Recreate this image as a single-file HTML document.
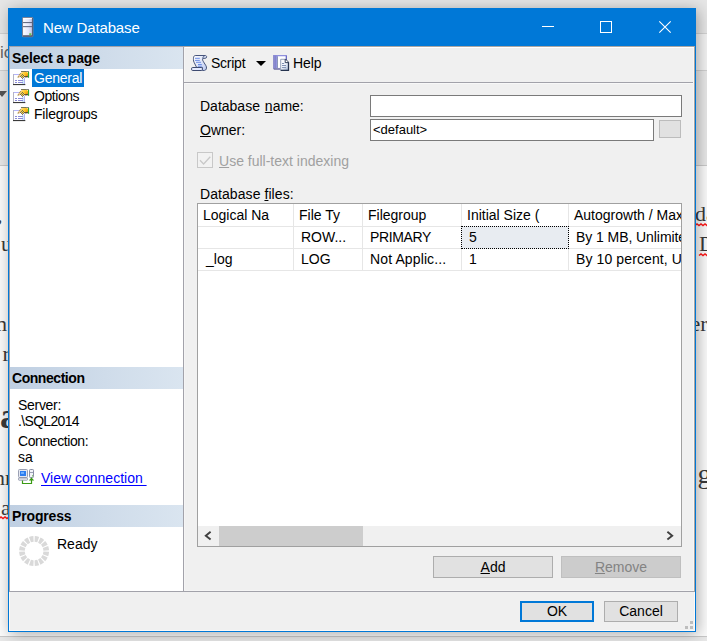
<!DOCTYPE html>
<html>
<head>
<meta charset="utf-8">
<title>New Database</title>
<style>
html,body{margin:0;padding:0;}
body{width:707px;height:641px;overflow:hidden;position:relative;background:#fff;font-family:"Liberation Sans",Arial,sans-serif;font-size:14px;color:#000;}
.abs{position:absolute;}
.t{position:absolute;white-space:nowrap;line-height:16px;height:16px;}
u{text-decoration:underline;text-underline-offset:1px;text-decoration-thickness:1px;}
svg{position:absolute;overflow:visible;}
/* background application */
.bg{position:absolute;left:0;width:707px;}
.serif{font-family:"Liberation Serif",serif;color:#3a3a3a;position:absolute;white-space:nowrap;font-size:22px;line-height:30px;height:30px;}
.sq{text-decoration:underline wavy #f02020;text-decoration-thickness:1.6px;text-underline-offset:1px;}
/* window */
#win{left:8px;top:8px;width:688px;height:624px;background:#f0f0f0;border:1px solid #0078d7;box-sizing:border-box;box-shadow:2px 2px 14px rgba(0,0,0,.32);}
#title{left:0;top:0;width:686px;height:37px;background:#0078d7;}
#title .cap{left:34px;top:9px;color:#fff;font-size:15px;line-height:20px;height:20px;letter-spacing:-.15px;}
#left{left:0;top:37px;width:175px;height:546px;background:#fff;border:1px solid #a2a2aa;box-sizing:border-box;}
.hdr{position:absolute;left:0;width:173px;height:22px;background:linear-gradient(90deg,#bfcfe2 0%,#cfdcea 55%,#dae5f0 100%);}
.hdr span{position:absolute;left:2px;top:3px;font-weight:bold;font-size:14px;line-height:16px;white-space:nowrap;}
.tr{letter-spacing:-.25px;}
.inp{position:absolute;background:#fff;border:1px solid #7a7a7a;box-sizing:border-box;}
.btn{position:absolute;background:#e1e1e1;border:1px solid #adadad;box-sizing:border-box;text-align:center;line-height:20px;font-size:14px;}
#grid{left:188px;top:194px;width:485px;height:344px;background:#fff;border:1px solid #a0a0a0;box-sizing:border-box;overflow:hidden;}
.gl{position:absolute;background:#e6e6e6;}
</style>
</head>
<body>
<!-- background app behind the dialog -->
<div class="bg" style="top:0;height:33px;background:#e6e6e6;"></div>
<div class="bg" style="top:33px;height:1px;background:#d2d2d2;"></div>
<div class="bg" style="top:34px;height:36px;background:#f3f3f3;"></div>
<div class="bg" style="top:70px;height:1px;background:#d0d0d0;"></div>
<div class="bg" style="top:71px;height:94px;background:#e8e8e8;"></div>
<div class="bg" style="top:165px;height:1px;background:#cacaca;"></div>
<div class="bg" style="top:166px;height:470px;background:#fbfbfb;"></div>
<div class="bg" style="top:636px;height:1px;background:#c8c8c8;"></div>
<div class="bg" style="top:637px;height:4px;background:#e8e8e8;"></div>

<div class="t" style="left:0px;top:43px;font-size:17px;line-height:20px;height:20px;color:#666;">ic</div>
<div class="abs" style="left:-3px;top:91px;width:0;height:0;border-left:5.5px solid transparent;border-right:5.5px solid transparent;border-top:6px solid #555;"></div>
<div class="serif" style="left:-3px;top:200px;">,</div>
<div class="serif" style="left:1px;top:229px;">u</div>
<div class="serif" style="left:-10px;top:309px;">m</div>
<div class="serif" style="left:2.5px;top:339px;">r</div>
<div class="serif" style="left:0px;top:396px;font-size:36px;font-weight:bold;line-height:40px;height:40px;">a</div>
<div class="serif" style="left:-6px;top:463px;">nr</div>
<div class="serif" style="left:1px;top:493px;">a</div>
<div class="serif" style="left:695px;top:199px;">da</div>
<div class="serif" style="left:699px;top:229px;">D</div>
<div class="serif" style="left:690.5px;top:309px;">er</div>
<div class="serif" style="left:697.5px;top:459px;font-size:28px;">ge</div>
<svg style="left:0;top:0;" width="707" height="641" viewBox="0 0 707 641"><path d="M-1,518.5 l2,-1.6 l2,1.6 l2,-1.6 l2,1.6 l2,-1.6 M695,225.5 l2,-1.6 l2,1.6 l2,-1.6 l2,1.6 l2,-1.6 l2,1.6 l2,-1.6 M699,255.5 l2,-1.6 l2,1.6 l2,-1.6 l2,1.6 l2,-1.6" fill="none" stroke="#ff1a1a" stroke-width="1.5"/></svg>

<div id="win" class="abs">
  <div id="title" class="abs">
    <!-- server icon -->
    <svg style="left:12.8px;top:7.9px;" width="11.4" height="20.3" viewBox="0 0 11 20" preserveAspectRatio="none">
      <defs>
        <linearGradient id="sg" x1="0" y1="0" x2="1" y2="0"><stop offset="0" stop-color="#ffffff"/><stop offset=".6" stop-color="#e4e6fb"/><stop offset="1" stop-color="#b4b8da"/></linearGradient>
      </defs>
      <rect x="0.5" y="0.5" width="10" height="19" rx="1" fill="url(#sg)" stroke="#7c8298" stroke-width="1"/>
      <rect x="1" y="1" width="9" height="1" fill="#fff" opacity=".9"/>
      <rect x="1" y="5" width="9" height="1" fill="#5b637c"/>
      <rect x="1" y="9" width="9" height="1" fill="#5b637c"/>
      <rect x="1" y="18" width="9" height="1.4" fill="#4a5068"/>
      <rect x="9.6" y="1" width="1" height="18" fill="#596078"/>
      <rect x="7" y="16" width="2" height="2" fill="#6cc24a"/>
    </svg>
    <div class="t cap">New Database</div>
    <!-- caption buttons -->
    <div class="abs" style="left:533px;top:17px;width:12px;height:1px;background:#fff;"></div>
    <div class="abs" style="left:591px;top:12px;width:12px;height:12px;border:1px solid #fff;box-sizing:border-box;"></div>
    <svg style="left:650px;top:12px;" width="12" height="12" viewBox="0 0 12 12"><path d="M0.3,0.3 L11.7,11.7 M11.7,0.3 L0.3,11.7" stroke="#fff" stroke-width="1.1" fill="none"/></svg>
  </div>

  <div id="left" class="abs">
    <div class="hdr" style="top:0"><span style="letter-spacing:-.12px">Select a page</span></div>

    <svg width="0" height="0" style="left:0;top:0;">
      <defs>
        <linearGradient id="hg" x1="0" y1="0" x2="1" y2="1"><stop offset="0" stop-color="#ffe48a"/><stop offset=".5" stop-color="#ffc21e"/><stop offset="1" stop-color="#e88600"/></linearGradient>
        <symbol id="pg" viewBox="0 0 17 16" overflow="visible">
          <rect x="0" y="3" width="12" height="11" fill="#fff"/>
          <rect x="0" y="3" width="12" height="1" fill="#b4b4fa"/>
          <rect x="0" y="3" width="1" height="11" fill="#b4b4c4"/>
          <rect x="9" y="8" width="3" height="5" fill="#cdeafc"/>
          <rect x="11" y="7" width="1" height="6" fill="#b4b4f2"/>
          <rect x="0" y="13" width="12.3" height="1.1" fill="#3a3a3a"/>
          <rect x="2" y="9" width="2" height="1" fill="#8a8ad6"/>
          <rect x="5" y="9" width="5" height="1" fill="#8a8ad6"/>
          <rect x="2" y="11" width="2" height="1" fill="#8a8ad6"/>
          <rect x="5" y="11" width="5" height="1" fill="#8a8ad6"/>
          <path d="M4.3,6 L7,2.2 L9.2,0.9 L9.4,3.2 L6.8,6.3 L5.2,6.8 Z" fill="#eeb88a" opacity=".95"/>
          <path d="M5,5h1v1h-1z M6,3h1v1h-1z M7,2h1v1h-1z M4.6,6h1v.8h-1z" fill="#8c9a50" opacity=".7"/>
          <ellipse cx="11.7" cy="3.3" rx="3.5" ry="2.8" fill="url(#hg)"/>
          <path d="M11,5.4 L15,4.8 L15,6.2 L12,6.5 Z" fill="#3a3626" opacity=".85"/>
          <path d="M7,4h1v1h-1z M8,3h1v1h-1z M8,5h1v1h-1z M9,2h1v1h-1z M9,4h1v1h-1z M9,6h1v1h-1z M10,3h1v1h-1z M10,5h1v1h-1z M11,4h1v1h-1z" fill="#ffdf3a"/>
          <path d="M7,5h1v1h-1z M8,4h1v1h-1z M8,6h1v1h-1z M9,3h1v1h-1z M9,5h1v1h-1z M9,7h1v1h-1z M10,4h1v1h-1z M10,6h1v1h-1z M11,5h1v1h-1z" fill="#4c4a5c" opacity=".8"/>
          <rect x="8" y="0" width="8" height="1" fill="#7a7852"/>
          <rect x="13" y="0" width="3" height="1" fill="#888" opacity=".8"/>
          <rect x="15" y="1" width="1.1" height="5.8" fill="#2faa2f"/>
        </symbol>
      </defs>
    </svg>
    <svg style="left:3px;top:24px;" width="17" height="16"><use href="#pg"/></svg>
    <svg style="left:3px;top:42px;" width="17" height="16"><use href="#pg"/></svg>
    <svg style="left:3px;top:60px;" width="17" height="16"><use href="#pg"/></svg>
    <div class="abs" style="left:22px;top:22px;width:52px;height:18px;background:#0078d7;"></div>
    <div class="t tr" style="left:24px;top:23px;color:#fff;">General</div>
    <div class="t" style="left:24px;top:41px;letter-spacing:-.45px;">Options</div>
    <div class="t" style="left:24px;top:59px;letter-spacing:-.2px;">Filegroups</div>

    <div class="hdr" style="top:320px"><span style="letter-spacing:-.45px">Connection</span></div>
    <div class="t" style="left:8px;top:350px;letter-spacing:-.3px;">Server:</div>
    <div class="t" style="left:8px;top:366px;letter-spacing:-.66px;">.\SQL2014</div>
    <div class="t" style="left:8px;top:386px;letter-spacing:-.42px;">Connection:</div>
    <div class="t" style="left:8px;top:402px;">sa</div>
    <svg style="left:8px;top:422px;" width="17" height="17" viewBox="0 0 17 17">
      <rect x="0.5" y="0.5" width="9" height="8" rx="1" fill="#e6e8f0" stroke="#9aa0b4"/>
      <rect x="2" y="2" width="6" height="5" fill="#2d7df0"/>
      <rect x="3" y="3" width="3" height="2" fill="#6fb0ff"/>
      <rect x="0.5" y="9" width="9" height="2.2" rx=".6" fill="#f4f4f8" stroke="#8088a0" stroke-width=".8"/>
      <rect x="11.5" y="0.5" width="4" height="8" rx=".8" fill="#f2f3f8" stroke="#8a90a6"/>
      <rect x="12" y="3" width="3" height="1" fill="#9aa0b4"/>
      <rect x="14" y="6.4" width="1" height="1" fill="#4caf30"/>
      <path d="M4.5,11.6 V14.5 H13.5 V9.6" fill="none" stroke="#3a9a14" stroke-width="1.2"/>
      <path d="M10.8,11.4 L13.5,8.4 L16.2,11.4 Z" fill="#3a9a14"/>
    </svg>
    <div class="t" style="left:31px;top:423px;color:#0000ff;text-decoration:underline;text-underline-offset:2px;white-space:pre;">View connection </div>

    <div class="hdr" style="top:458px"><span style="letter-spacing:-.15px">Progress</span></div>
    <svg style="left:9px;top:489px;" width="30.2" height="30.2" viewBox="0 0 30.2 30.2"><path d="M30.08,15.82 A15.0,15.0 0 0 1 29.22,20.17 L23.85,18.24 A9.3,9.3 0 0 0 24.39,15.55 Z M28.67,21.50 A15.0,15.0 0 0 1 26.20,25.19 L21.98,21.35 A9.3,9.3 0 0 0 23.51,19.07 Z M25.19,26.20 A15.0,15.0 0 0 1 21.50,28.67 L19.07,23.51 A9.3,9.3 0 0 0 21.35,21.98 Z M20.17,29.22 A15.0,15.0 0 0 1 15.82,30.08 L15.55,24.39 A9.3,9.3 0 0 0 18.24,23.85 Z M14.38,30.08 A15.0,15.0 0 0 1 10.03,29.22 L11.96,23.85 A9.3,9.3 0 0 0 14.65,24.39 Z M8.70,28.67 A15.0,15.0 0 0 1 5.01,26.20 L8.85,21.98 A9.3,9.3 0 0 0 11.13,23.51 Z M4.00,25.19 A15.0,15.0 0 0 1 1.53,21.50 L6.69,19.07 A9.3,9.3 0 0 0 8.22,21.35 Z M0.98,20.17 A15.0,15.0 0 0 1 0.12,15.82 L5.81,15.55 A9.3,9.3 0 0 0 6.35,18.24 Z M0.12,14.38 A15.0,15.0 0 0 1 0.98,10.03 L6.35,11.96 A9.3,9.3 0 0 0 5.81,14.65 Z M1.53,8.70 A15.0,15.0 0 0 1 4.00,5.01 L8.22,8.85 A9.3,9.3 0 0 0 6.69,11.13 Z M5.01,4.00 A15.0,15.0 0 0 1 8.70,1.53 L11.13,6.69 A9.3,9.3 0 0 0 8.85,8.22 Z M10.03,0.98 A15.0,15.0 0 0 1 14.38,0.12 L14.65,5.81 A9.3,9.3 0 0 0 11.96,6.35 Z M15.82,0.12 A15.0,15.0 0 0 1 20.17,0.98 L18.24,6.35 A9.3,9.3 0 0 0 15.55,5.81 Z M21.50,1.53 A15.0,15.0 0 0 1 25.19,4.00 L21.35,8.22 A9.3,9.3 0 0 0 19.07,6.69 Z M26.20,5.01 A15.0,15.0 0 0 1 28.67,8.70 L23.51,11.13 A9.3,9.3 0 0 0 21.98,8.85 Z M29.22,10.03 A15.0,15.0 0 0 1 30.08,14.38 L24.39,14.65 A9.3,9.3 0 0 0 23.85,11.96 Z" fill="#d9d9d9"/></svg>
    <div class="t" style="left:47px;top:489px;">Ready</div>
  </div>
  <!-- separators -->
  <div class="abs" style="left:175px;top:37px;width:511px;height:1px;background:#aaa6a3;"></div>
  <div class="abs" style="left:175px;top:38px;width:510px;height:1px;background:#fff;"></div>
  <div class="abs" style="left:175px;top:38px;width:1px;height:544px;background:#f5f5f5;"></div>
  <div class="abs" style="left:175px;top:73px;width:510px;height:1px;background:#a2a2aa;"></div>
  <div class="abs" style="left:176px;top:74px;width:508px;height:1px;background:#f8f8f8;"></div>
  <div class="abs" style="left:175px;top:582px;width:511px;height:1px;background:#a2a2aa;"></div>
  <div class="abs" style="left:176px;top:581px;width:509px;height:1px;background:#f5f5f5;"></div>
  <div class="abs" style="left:684px;top:39px;width:1px;height:543px;background:#f7f7f7;"></div>
  <div class="abs" style="left:685px;top:37px;width:1px;height:546px;background:#a8a4a2;"></div>
  <div class="abs" style="left:685px;top:583px;width:1px;height:39px;background:#fdf9f5;"></div>
  <div class="abs" style="left:0;top:583px;width:1px;height:39px;background:#fdf9f5;"></div>
  <div class="abs" style="left:0;top:621px;width:686px;height:1px;background:#fdf9f5;"></div>

  <!-- toolbar -->
  <svg style="left:182px;top:46px;" width="16" height="16" viewBox="0 0 16 16">
    <defs><linearGradient id="scg" x1="0" y1="0" x2="1" y2="1"><stop offset="0" stop-color="#ffffff"/><stop offset="1" stop-color="#bccaf2"/></linearGradient></defs>
    <path d="M4.2,0.5 L14.3,0.5 C15.3,0.5 15.6,1.2 15.6,1.9 C15.6,2.8 15,3.3 14.2,3.3 L11.9,3.3 C11.3,4.5 11.6,5.5 12.5,6.8 L15,10.8 C15.8,12.2 15.6,14 14.6,15 C14,15.4 13,15.5 12,15.5 L11.4,15.5 L11.4,12.4 L5.6,12.4 L3,7.2 C2.3,5.8 2.4,3.5 2.6,2.2 C2.9,1 3.5,0.5 4.2,0.5 Z" fill="url(#scg)" stroke="#47557c" stroke-width="1"/>
    <path d="M11.9,3.3 C11.9,1.6 12.6,0.9 14,0.7" fill="none" stroke="#47557c" stroke-width=".9"/>
    <rect x="0.5" y="12.5" width="11" height="3" rx="1.3" fill="#e4eaff" stroke="#3d4a70" stroke-width="1"/>
    <path d="M4,3.3h4.8 M4,5.4h4.8 M5,7.3h5 M7,9.5h3.8 M7,11.2h3.8" stroke="#6d8ee6" stroke-width="1"/>
  </svg>
  <svg style="left:264px;top:46px;" width="16" height="16" viewBox="0 0 16 16">
    <defs>
      <linearGradient id="bk" x1="0" y1="0" x2="1" y2="0"><stop offset="0" stop-color="#7474be"/><stop offset=".12" stop-color="#9090d6"/><stop offset=".2" stop-color="#7c7cc6"/><stop offset=".3" stop-color="#b4b4fc"/><stop offset=".4" stop-color="#a6a6f4"/><stop offset="1" stop-color="#9c9cec"/></linearGradient>
      <linearGradient id="dc" x1="0" y1="0" x2="1" y2="1"><stop offset="0" stop-color="#ffffff"/><stop offset=".5" stop-color="#f2f6fd"/><stop offset="1" stop-color="#9fb4d2"/></linearGradient>
    </defs>
    <path d="M0.2,0.2 H13.8 V13.2 H1.6 L0.2,14.6 Z" fill="url(#bk)"/>
    <rect x="0.2" y="0.2" width="13.6" height="1" fill="#8686d6"/>
    <rect x="4.8" y="1.3" width="8" height="11.6" fill="#fff"/>
    <rect x="4.2" y="1.3" width=".8" height="11.6" fill="#7c8ca6"/>
    <rect x="12.8" y="0.8" width="1" height="5" fill="#5c5cb8"/>
    <path d="M0.9,14 H7.4" stroke="#4e4e90" stroke-width="1.2"/>
    <path d="M7.7,4.3 H12.2 L15.5,7.6 V15.3 H7.7 Z" fill="url(#dc)" stroke="#8a98b2" stroke-width=".9"/>
    <path d="M12.2,4.3 L15.5,7.6 V15.3 H7.7" fill="none" stroke="#26344f" stroke-width="1.25"/>
    <path d="M12.2,4.3 V7.6 H15.5" fill="#fff" stroke="#26344f" stroke-width=".9"/>
    <path d="M9,8.5h2.2 M9,10.5h4 M9,12.6h4" stroke="#7f90b2" stroke-width="1"/>
  </svg>
  <div class="t" style="left:202px;top:46px;letter-spacing:-.25px;">Script</div>
  <div class="abs" style="left:247px;top:52px;width:0;height:0;border-left:5px solid transparent;border-right:5px solid transparent;border-top:5px solid #000;"></div>
  <div class="t" style="left:284px;top:46px;letter-spacing:-.1px;">Help</div>

  <!-- form -->
  <div class="t" style="left:191px;top:89px;word-spacing:1px;">Database <u>n</u>ame:</div>
  <div class="t" style="left:191px;top:113px;"><u>O</u>wner:</div>
  <div class="inp" style="left:361px;top:86px;width:312px;height:22px;"></div>
  <div class="inp" style="left:361px;top:110px;width:284px;height:22px;"><div class="t" style="left:2px;top:2px;font-size:13px;">&lt;default&gt;</div></div>
  <div class="abs" style="left:650px;top:111px;width:22px;height:18px;background:#e1e1e1;border:1px solid #bcbcbc;box-sizing:border-box;"></div>

  <div class="abs" style="left:188px;top:143px;width:16px;height:16px;background:#f2f2f2;border:1px solid #c8c8c8;box-sizing:border-box;"></div>
  <svg style="left:188px;top:143px;" width="16" height="16" viewBox="0 0 16 16"><path d="M3,8.3 L6.6,12 L13.3,4.8" stroke="#c8c8c8" stroke-width="1.3" fill="none"/></svg>
  <div class="t" style="left:210px;top:144px;color:#a0a0a0;"><u>U</u>se full-text indexing</div>

  <div class="t" style="left:191px;top:177px;letter-spacing:.07px;">Database <u>f</u>iles:</div>

  <div id="grid" class="abs">
    <div class="gl" style="left:0;top:22px;width:484px;height:1px;"></div>
    <div class="gl" style="left:0;top:44px;width:484px;height:1px;"></div>
    <div class="gl" style="left:0;top:66px;width:484px;height:1px;"></div>
    <div class="gl" style="left:95px;top:0;width:1px;height:67px;"></div>
    <div class="gl" style="left:164px;top:0;width:1px;height:67px;"></div>
    <div class="gl" style="left:263px;top:0;width:1px;height:67px;"></div>
    <div class="gl" style="left:370px;top:0;width:1px;height:67px;"></div>

    <div class="t" style="left:5px;top:3px;">Logical Na</div>
    <div class="t" style="left:101px;top:3px;">File Ty</div>
    <div class="t" style="left:170px;top:3px;">Filegroup</div>
    <div class="t" style="left:269px;top:3px;">Initial Size (</div>
    <div class="t" style="left:376px;top:3px;">Autogrowth / Max</div>

    <div class="t" style="left:103px;top:25px;">ROW...</div>
    <div class="t" style="left:172px;top:25px;letter-spacing:-.35px;">PRIMARY</div>
    <div class="abs" style="left:263px;top:22px;width:108px;height:23px;background:#e8ecf1;border:1px dotted #000;box-sizing:border-box;"></div>
    <div class="t" style="left:271px;top:25px;">5</div>
    <div class="t" style="left:378px;top:25px;letter-spacing:-.07px;">By 1 MB, Unlimited</div>

    <div class="t" style="left:8px;top:47px;">_log</div>
    <div class="t" style="left:103px;top:47px;">LOG</div>
    <div class="t" style="left:172px;top:47px;letter-spacing:.12px;">Not Applic...</div>
    <div class="t" style="left:271px;top:47px;">1</div>
    <div class="t" style="left:378px;top:47px;letter-spacing:.11px;">By 10 percent, Unlimited</div>

    <!-- scrollbar -->
    <div class="abs" style="left:0;top:322px;width:484px;height:20px;background:#f0f0f0;"></div>
    <div class="abs" style="left:21px;top:322px;width:144px;height:20px;background:#cdcdcd;"></div>
    <svg style="left:6px;top:327px;" width="8" height="10" viewBox="0 0 8 10"><path d="M6.6,0.8 L1.8,4.7 L6.6,8.6" fill="none" stroke="#404040" stroke-width="1.9"/></svg>
    <svg style="left:468px;top:327px;" width="8" height="10" viewBox="0 0 8 10"><path d="M1.4,0.8 L6.2,4.7 L1.4,8.6" fill="none" stroke="#404040" stroke-width="1.9"/></svg>
  </div>

  <div class="btn" style="left:424px;top:547px;width:120px;height:22px;"><u>A</u>dd</div>
  <div class="btn" style="left:552px;top:547px;width:120px;height:22px;background:#cccccc;border-color:#bfbfbf;color:#838383;"><u>R</u>emove</div>
  <div class="btn" style="left:511px;top:592px;width:74px;height:21px;border:2px solid #0078d7;line-height:17px;">OK</div>
  <div class="btn" style="left:595px;top:592px;width:74px;height:21px;line-height:19px;">Cancel</div>
  <svg style="left:672px;top:608px;" width="14" height="14" viewBox="0 0 14 14"><path d="M9,9h3v3h-3z M9,4h3v3h-3z M4,9h3v3h-3z" fill="#bdbdbd"/></svg>
</div>
</body>
</html>
